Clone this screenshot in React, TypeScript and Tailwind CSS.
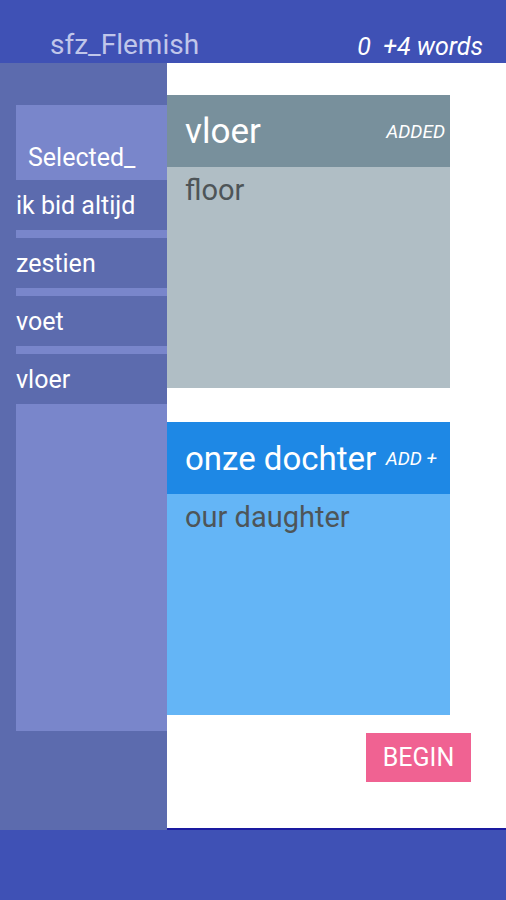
import React from 'react';

const words = ['ik bid altijd', 'zestien', 'voet', 'vloer'];

function WordCard({
  word,
  meaning,
  tag,
  headBg,
  bodyBg,
  headText,
  tagPad,
}: {
  word: string;
  meaning: string;
  tag: string;
  headBg: string;
  bodyBg: string;
  headText: string;
  tagPad: string;
}) {
  return (
    <div className="w-[283px] flex flex-col">
      <div className={`h-[72px] ${headBg} flex items-center justify-between pl-[18px] ${tagPad}`}>
        <span className={`${headText} text-white leading-none whitespace-nowrap`}>{word}</span>
        <span className="text-[19px] italic text-white leading-none whitespace-nowrap">{tag}</span>
      </div>
      <div className={`h-[221px] ${bodyBg} pl-[18px] pt-[5px]`}>
        <span className="text-[29px] text-[#4e5558] leading-tight">{meaning}</span>
      </div>
    </div>
  );
}

export default function App() {
  return (
    <div
      className="h-[900px] w-[506px] flex flex-col bg-[#3f51b5] overflow-hidden"
      style={{ fontFamily: 'Roboto, "Noto Sans", sans-serif' }}
    >
      {/* Header */}
      <div className="h-[63px] flex items-end justify-between pl-[50px] pr-[23px] pb-[1px]">
        <span className="text-[28px] text-[#c0c6ea] leading-tight">sfz_Flemish</span>
        <span className="text-[25px] italic text-white leading-tight">0&nbsp;&nbsp;+4 words</span>
      </div>

      {/* Body */}
      <div className="h-[767px] flex">
        {/* Sidebar */}
        <div className="w-[167px] bg-[#5c6bae] pt-[42px] pl-[16px]">
          <div className="h-[75px] bg-[#7986cb] flex items-end pl-[12px] pb-[10px]">
            <span className="text-[25px] text-white leading-none">Selected_</span>
          </div>
          {words.map((w, i) => (
            <div key={w}>
              <div className="h-[50px] flex items-center">
                <span className="text-[25px] text-white leading-none">{w}</span>
              </div>
              {i < words.length - 1 && <div className="h-[8px] bg-[#7986cb]" />}
            </div>
          ))}
          <div className="h-[327px] bg-[#7986cb]" />
        </div>

        {/* Main pane */}
        <div className="flex-1 bg-white border-b-2 border-[#1a1aa0] flex flex-col pt-[32px]">
          <WordCard
            word="vloer"
            meaning="floor"
            tag="ADDED"
            headBg="bg-[#78909c]"
            bodyBg="bg-[#b0bec5]"
            headText="text-[35px]"
            tagPad="pr-[5px]"
          />
          <div className="h-[34px]" />
          <WordCard
            word="onze dochter"
            meaning="our daughter"
            tag="ADD +"
            headBg="bg-[#1e88e5]"
            bodyBg="bg-[#64b5f6]"
            headText="text-[33px]"
            tagPad="pr-[13px]"
          />
          <div className="flex justify-end pr-[35px] pt-[18px]">
            <button className="w-[105px] h-[49px] bg-[#f06292] text-white text-[25px] leading-none">
              BEGIN
            </button>
          </div>
        </div>
      </div>

      {/* Footer */}
      <div className="flex-1" />
    </div>
  );
}
